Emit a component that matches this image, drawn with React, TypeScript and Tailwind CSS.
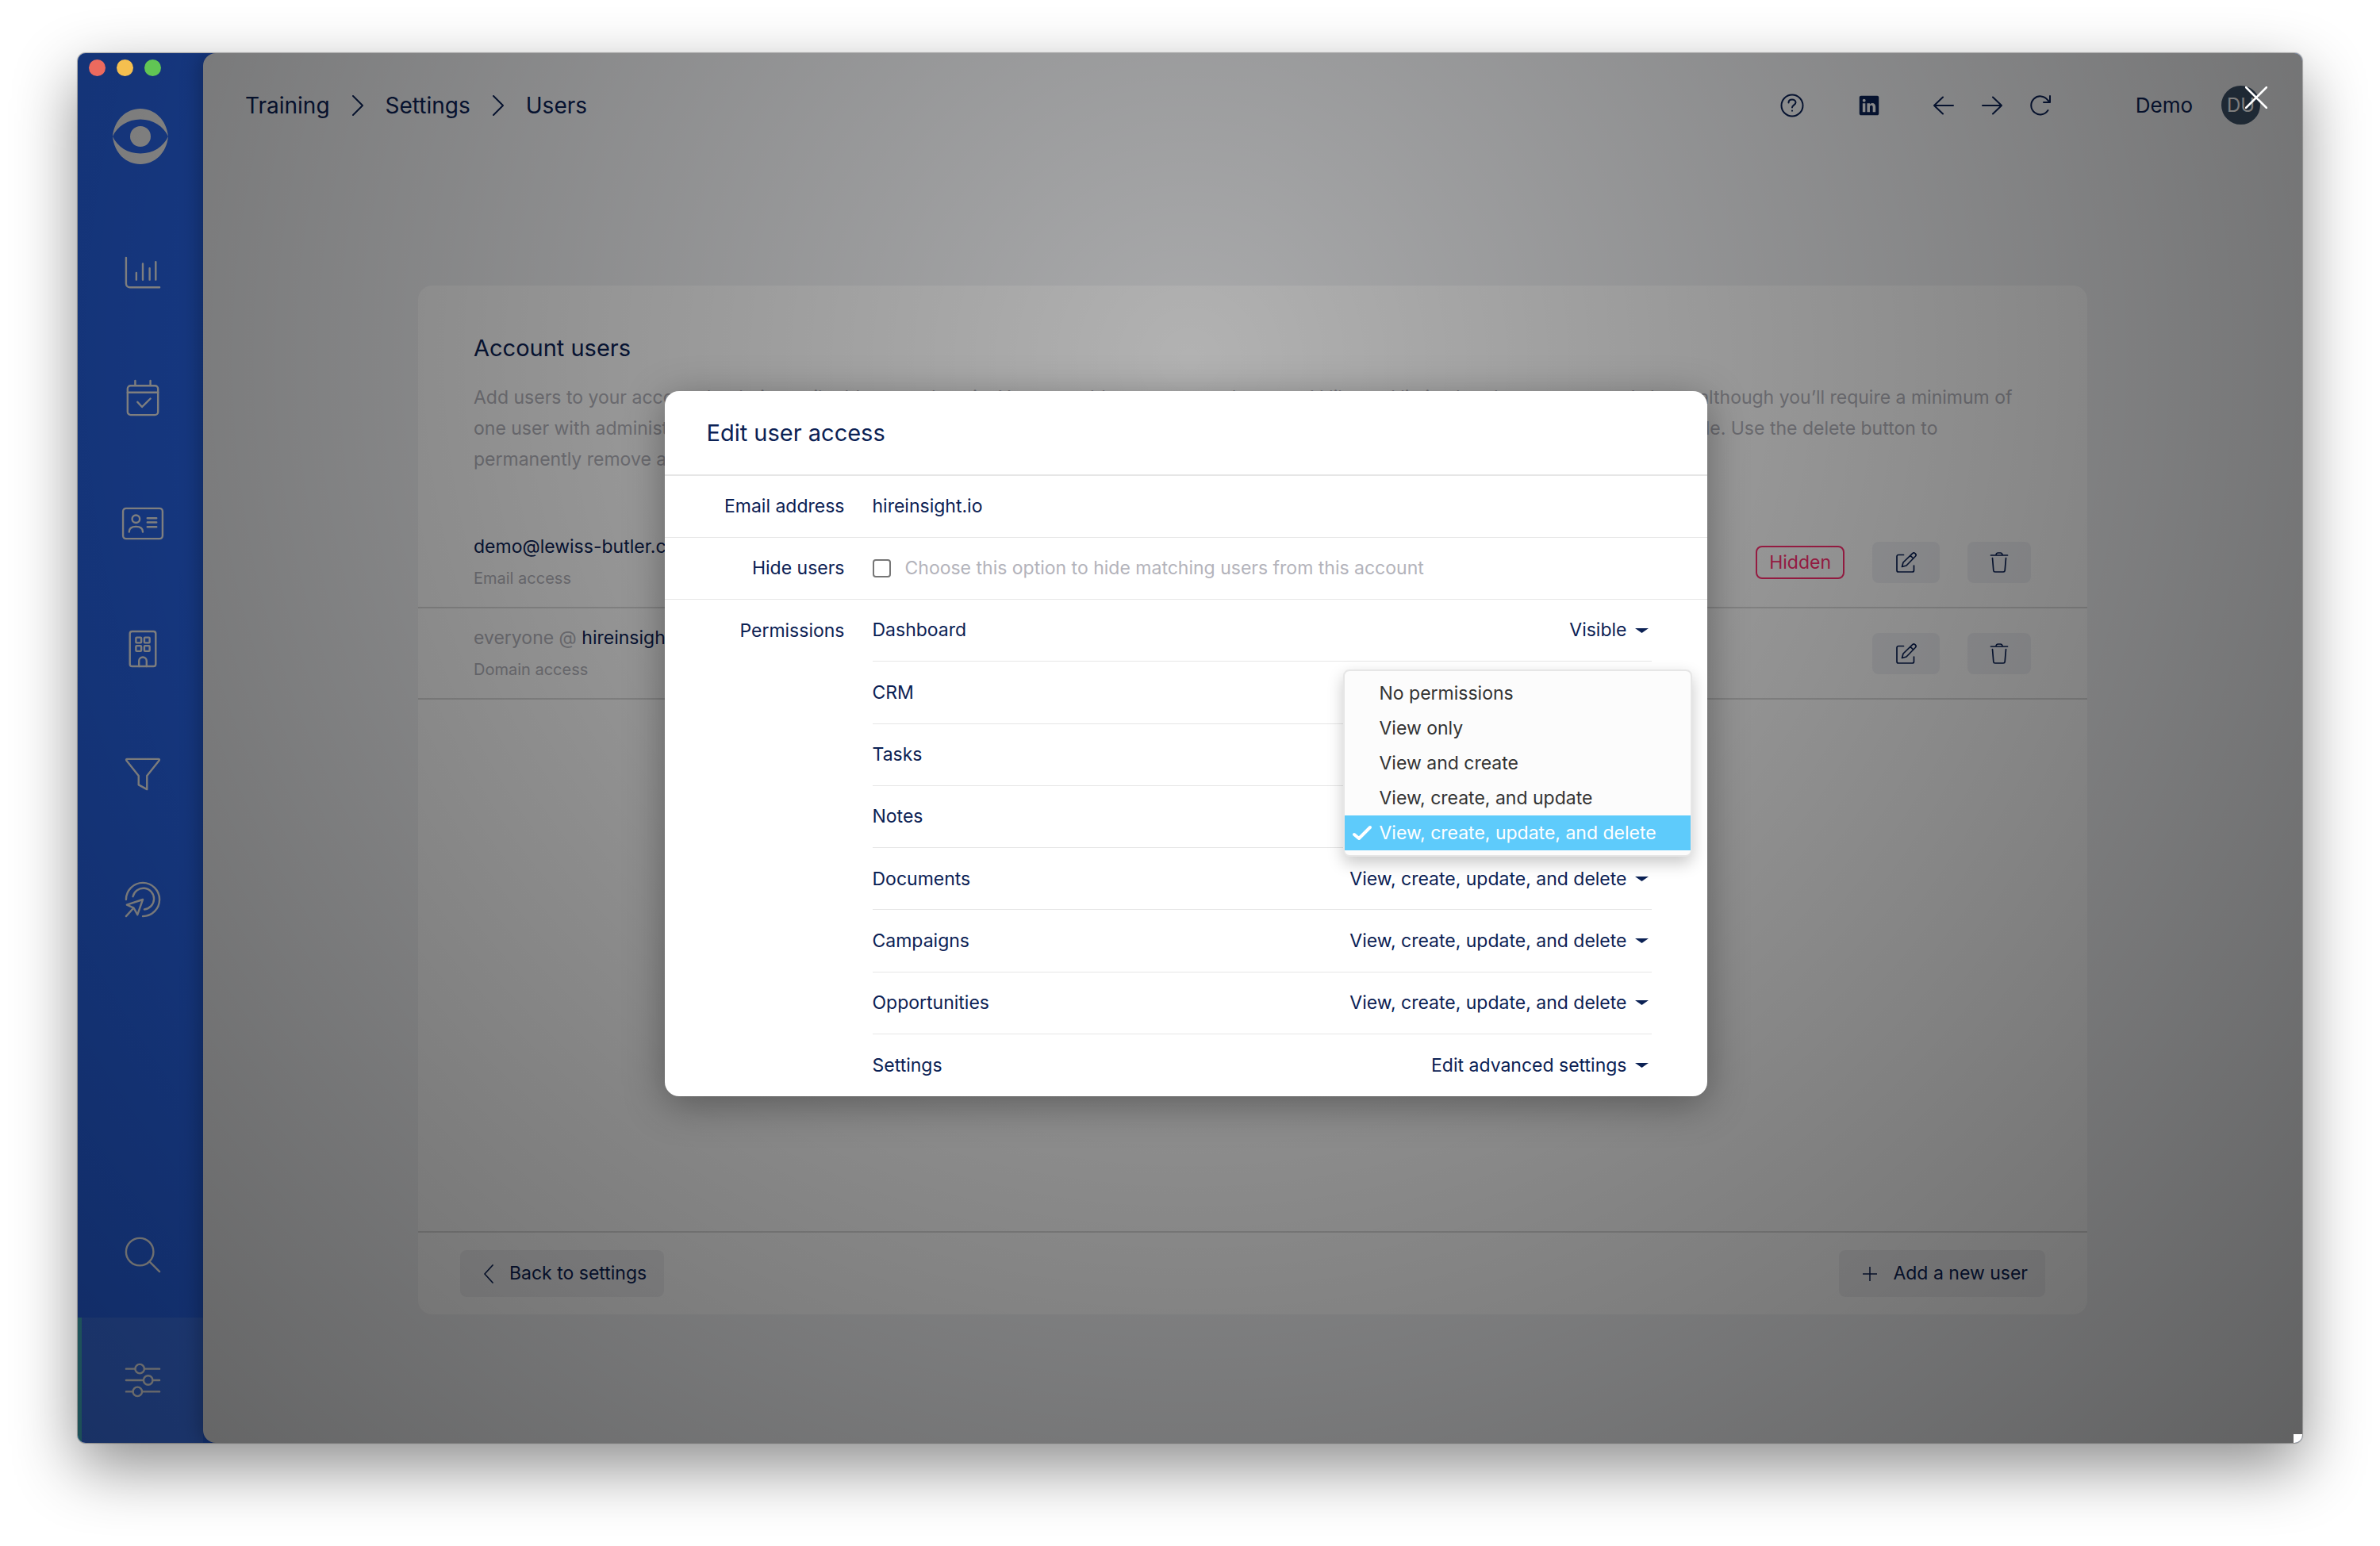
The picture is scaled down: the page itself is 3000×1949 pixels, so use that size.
import React, { useState } from "react";
import { IoLogoLinkedin } from "react-icons/io5";

interface IconProps {
  className?: string;
  viewBox?: string;
  strokeWidth?: number;
  children: React.ReactNode;
}

const Icon: React.FC<IconProps> = ({
  className = "size-12",
  viewBox = "0 0 48 48",
  strokeWidth = 2,
  children,
}) => (
  <svg
    className={className}
    viewBox={viewBox}
    fill="none"
    stroke="currentColor"
    strokeWidth={strokeWidth}
    strokeLinecap="round"
    strokeLinejoin="round"
    aria-hidden="true"
  >
    {children}
  </svg>
);

const navItems = [
  {
    label: "Dashboard",
    icon: <path d="M2 4v34a5 5 0 0 0 5 5h39M15.5 33v-9M24 33V12M33 33V18M41 33V9.5" />,
  },
  {
    label: "Tasks",
    icon: (
      <>
        <rect x="4" y="7.5" width="40" height="38.5" rx="4" />
        <path d="M4 16.5h40M14 1v6M34 1v6M17 29l6 6.5L34 24.5" />
      </>
    ),
  },
  {
    label: "Contacts",
    icon: (
      <>
        <rect x="-2" y="4" width="52" height="40" rx="4" />
        <circle cx="15" cy="18" r="5" />
        <path d="M6 35c0-4.5 3-7 9-7s9 2.5 9 7M30 17h12M30 22.5h12M30 28.5h12" />
      </>
    ),
  },
  {
    label: "Companies",
    icon: (
      <>
        <rect x="7" y="1" width="34" height="46" rx="3" />
        <rect x="15" y="9" width="7" height="7" rx="1" />
        <rect x="26" y="9" width="7" height="7" rx="1" />
        <rect x="15" y="20" width="7" height="7" rx="1" />
        <rect x="26" y="20" width="7" height="7" rx="1" />
        <path d="M19 47v-7a5 5 0 0 1 10 0v7" />
      </>
    ),
  },
  {
    label: "Pipeline",
    icon: <path d="M3 4h42c1 0 1 1 .5 2L29.5 26v18L18.5 38V26L2.5 6c-.5-1-.5-2 .5-2z" />,
  },
  {
    label: "Campaigns",
    icon: (
      <>
        <path d="M2 24a22 22 0 1 1 22 22" />
        <path d="M11 20a14 14 0 1 1 15 17" />
        <path d="M24 24L3 31l9 4 5 9zM12 35L2 46" />
      </>
    ),
  },
];

const rights = "View, create, update, and delete";

const permissions = [
  { name: "Dashboard", value: "Visible" },
  { name: "CRM", value: rights, open: true },
  { name: "Tasks", value: rights },
  { name: "Notes", value: rights },
  { name: "Documents", value: rights },
  { name: "Campaigns", value: rights },
  { name: "Opportunities", value: rights },
  { name: "Settings", value: "Edit advanced settings" },
];

const options = [
  "No permissions",
  "View only",
  "View and create",
  "View, create, and update",
  rights,
];

const Sidebar: React.FC = () => (
  <aside className="flex w-[158px] shrink-0 flex-col text-white">
    <div className="relative z-20 flex gap-3.5 pt-2 pl-3.5">
      <span className="size-[21px] rounded-full bg-[#ec6a5e]" />
      <span className="size-[21px] rounded-full bg-[#f5bf4f]" />
      <span className="size-[21px] rounded-full bg-[#61c554]" />
    </div>
    <svg className="mx-auto mt-[41px] mb-[58px] size-[70px]" viewBox="0 0 70 70" fill="currentColor" aria-hidden="true">
      <path d="M0 35C6 22 19 13.5 35 13.5S64 22 70 35C68 14 53 0 35 0S2 14 0 35z" />
      <path d="M0 35c6 13 19 21.5 35 21.5S64 48 70 35c-2 21-17 35-35 35S2 56 0 35z" />
      <circle cx="35" cy="35" r="13" />
    </svg>
    <nav className="flex flex-1 flex-col">
      {navItems.map((item) => (
        <a
          key={item.label}
          href="#"
          aria-label={item.label}
          className="flex h-[158px] items-center justify-center border-l-[5px] border-transparent"
        >
          <Icon className="size-[46px] overflow-visible" strokeWidth={2.5}>
            {item.icon}
          </Icon>
        </a>
      ))}
      <a
        href="#"
        aria-label="Search"
        className="mt-auto flex h-[158px] items-center justify-center border-l-[5px] border-transparent"
      >
        <Icon className="size-[46px]" strokeWidth={2.5}>
          <circle cx="20" cy="20" r="18" />
          <path d="M33 33l13 13" />
        </Icon>
      </a>
      <a
        href="#"
        aria-label="Settings"
        className="flex h-[158px] items-center justify-center border-l-[5px] border-[#48c6d9] bg-white/10"
      >
        <Icon className="size-[46px]" strokeWidth={2.5}>
          <path d="M2 9h12M26 9h20M2 24h23M37 24h9M2 39h9M23 39h23" />
          <circle cx="20" cy="9" r="6" />
          <circle cx="31" cy="24" r="6" />
          <circle cx="17" cy="39" r="6" />
        </Icon>
      </a>
    </nav>
  </aside>
);

const Chevron: React.FC = () => (
  <Icon className="h-[26px] w-3.5" viewBox="0 0 14 26">
    <path d="M1 1l12 12L1 25" />
  </Icon>
);

const TopBar: React.FC = () => (
  <header className="flex items-center justify-between px-[53px] py-[41px]">
    <nav className="flex items-center gap-7 text-[28px]">
      <a href="#">Training</a>
      <Chevron />
      <a href="#">Settings</a>
      <Chevron />
      <a href="#">Users</a>
    </nav>
    <div className="flex items-center text-[26px]">
      <button type="button" aria-label="Help">
        <Icon className="size-[30px]" viewBox="0 0 30 30">
          <circle cx="15" cy="15" r="13.5" />
          <path d="M10.5 11.5c0-2.5 2-4 4.5-4s4.5 1.5 4.5 3.7c0 3-4.5 3.3-4.5 6.3M15 21.5v.2" />
        </Icon>
      </button>
      <a href="#" aria-label="LinkedIn" className="ml-[68px]">
        <IoLogoLinkedin className="size-7" />
      </a>
      <div className="ml-[67px] flex items-center gap-[35px]">
        <button type="button" aria-label="Back">
          <Icon className="size-[26px]" viewBox="0 0 26 26">
            <path d="M12 2.5L1 13l11 10.5M1 13h24" />
          </Icon>
        </button>
        <button type="button" aria-label="Forward">
          <Icon className="size-[26px]" viewBox="0 0 26 26">
            <path d="M14 2.5L25 13 14 23.5M25 13H1" />
          </Icon>
        </button>
        <button type="button" aria-label="Reload">
          <Icon className="size-[26px]" viewBox="0 0 26 26">
            <path d="M22.5 19A11.5 11.5 0 1 1 22 6l3 3M25 1v8h-8" />
          </Icon>
        </button>
      </div>
      <span className="ml-[107px]">Demo</span>
      <span className="ml-9 flex size-[49px] items-center justify-center rounded-full bg-[#3e536a] text-2xl text-white">
        DU
      </span>
    </div>
  </header>
);

const RowActions: React.FC = () => (
  <>
    <button
      type="button"
      aria-label="Edit"
      className="flex h-[52px] w-[85px] items-center justify-center rounded-lg bg-[#f1f2f6]"
    >
      <Icon className="size-[26px]" viewBox="0 0 26 26" strokeWidth={1.7}>
        <path d="M9.5 3.5H3a2 2 0 0 0-2 2V23a2 2 0 0 0 2 2h17.5a2 2 0 0 0 2-2v-6" />
        <path d="M7.5 18.5L9 13 20.5 1.8a2.6 2.6 0 0 1 3.7 3.7L13 17zM18 4.3L21.7 8" />
      </Icon>
    </button>
    <button
      type="button"
      aria-label="Delete"
      className="flex h-[52px] w-20 items-center justify-center rounded-lg bg-[#f1f2f6]"
    >
      <Icon className="size-[26px]" viewBox="0 0 26 26" strokeWidth={1.7}>
        <path d="M2.5 4h21M9 4c0-2 1-3 2.5-3h3C16 1 17 2 17 4M4.5 7.5l1.3 15.7a2 2 0 0 0 2 1.8h10.4a2 2 0 0 0 2-1.8l1.3-15.7" />
      </Icon>
    </button>
  </>
);

const UsersCard: React.FC = () => (
  <section className="mx-[271px] my-[162px] flex flex-1 flex-col rounded-[18px] bg-white text-[23px]">
    <div className="px-[70px] pt-[58px]">
      <h1 className="text-[29px] leading-[42px]">Account users</h1>
      <p className="mt-[22px] leading-[39px] text-[#b3b3bb]">
        Add users to your account by their email address or domain. You can add as many people as you’d
        like and limit what they can see and share, although you’ll require a minimum of
        <br />
        one user with administrator access. Hidden users still have direct access to the account but
        they are never listed or suggested as being available. Use the delete button to
        <br />
        permanently remove a user from this account.
      </p>
    </div>
    <ul className="mt-[53px] flex-1">
      <li className="flex h-[115px] items-center gap-[35px] border-b-2 border-[#dcdcdc] pr-[71px] pl-[70px]">
        <div className="flex-1">
          <div className="leading-10">demo@lewiss-butler.com</div>
          <div className="text-xl leading-10 text-[#b3b3bb]">Email access</div>
        </div>
        <span className="rounded-lg border-2 border-[#ff2e70] px-[15px] leading-[38px] text-[#ff2e70]">
          Hidden
        </span>
        <RowActions />
      </li>
      <li className="flex h-[115px] items-center gap-[35px] border-b-2 border-[#dcdcdc] pr-[71px] pl-[70px]">
        <div className="flex-1">
          <div className="leading-10">
            <span className="text-[#b3b3bb]">everyone @</span> hireinsight.io
          </div>
          <div className="text-xl leading-10 text-[#b3b3bb]">Domain access</div>
        </div>
        <RowActions />
      </li>
    </ul>
    <footer className="flex justify-between border-t-2 border-[#dcdcdc] px-[53px] py-[22px]">
      <button
        type="button"
        className="flex h-[59px] items-center gap-5 rounded-lg bg-[#f1f1f3] pr-[22px] pl-[30px]"
      >
        <Icon className="h-6 w-3" viewBox="0 0 12 24" strokeWidth={1.7}>
          <path d="M11 1L1 12l10 11" />
        </Icon>
        Back to settings
      </button>
      <button
        type="button"
        className="flex h-[59px] items-center gap-5 rounded-lg bg-[#f1f1f3] pr-[22px] pl-[30px]"
      >
        <Icon className="size-[18px]" viewBox="0 0 18 18" strokeWidth={1.5}>
          <path d="M9 0v18M0 9h18" />
        </Icon>
        Add a new user
      </button>
    </footer>
  </section>
);

interface MenuProps {
  value: string;
  onChange: (value: string) => void;
}

const OptionsMenu: React.FC<MenuProps> = ({ value, onChange }) => (
  <ul className="absolute top-2.5 -right-[51px] z-10 w-[440px] rounded-lg border-2 border-[#e6e6e6] bg-[#fcfcfc] py-1.5 text-[#333] shadow-[0_8px_20px_rgba(0,0,0,0.22)]">
    {options.map((option) => (
      <li key={option}>
        <button
          type="button"
          onClick={() => onChange(option)}
          className={`flex h-11 w-full items-center pl-2 ${
            option === value ? "bg-[#5ecbfb] text-white" : ""
          }`}
        >
          <span className="w-9">
            {option === value && (
              <Icon className="size-7" viewBox="0 0 28 28" strokeWidth={4}>
                <path d="M4 16l6 5L24 7" />
              </Icon>
            )}
          </span>
          {option}
        </button>
      </li>
    ))}
  </ul>
);

const EditDialog: React.FC = () => {
  const [crm, setCrm] = useState(rights);

  return (
    <div
      role="dialog"
      aria-labelledby="dialog-title"
      className="flex min-h-[889px] w-[1314px] max-w-full flex-col rounded-[18px] bg-white text-[23px] shadow-[0_10px_50px_rgba(0,0,0,0.35)]"
    >
      <h2
        id="dialog-title"
        className="border-b-2 border-[#e6e6e6] px-[53px] text-[29px] leading-[105px]"
      >
        Edit user access
      </h2>
      <div className="flex h-[78px] items-center border-b border-[#e6e6e6]">
        <span className="w-[262px] pr-[35px] text-right">Email address</span>
        <span>hireinsight.io</span>
      </div>
      <div className="flex h-[78px] items-center border-b border-[#e6e6e6]">
        <span className="w-[262px] pr-[35px] text-right">Hide users</span>
        <label className="flex items-center gap-[18px] text-[#b3b3bb]">
          <input
            type="checkbox"
            className="size-[23px] appearance-none rounded border-2 border-[#767676] bg-white"
          />
          Choose this option to hide matching users from this account
        </label>
      </div>
      <div className="flex flex-1 pr-[70px]">
        <span className="w-[262px] pr-[35px] text-right leading-[78px]">Permissions</span>
        <ul className="flex flex-1 flex-col divide-y divide-[#e6e6e6]">
          {permissions.map((item) => (
            <li
              key={item.name}
              className="relative flex min-h-[78px] flex-1 items-center justify-between"
            >
              <label htmlFor={item.name}>{item.name}</label>
              <select
                id={item.name}
                defaultValue={item.value}
                className="appearance-none bg-transparent pr-[31px] [text-align-last:right]"
              >
                <option>{item.value}</option>
              </select>
              <svg
                className="pointer-events-none absolute right-1 h-1.5 w-[17px]"
                viewBox="0 0 17 6"
                fill="currentColor"
                aria-hidden="true"
              >
                <path d="M0 0h17L8.5 6z" />
              </svg>
              {item.open && <OptionsMenu value={crm} onChange={setCrm} />}
            </li>
          ))}
        </ul>
      </div>
    </div>
  );
};

export default function App() {
  return (
    <div className="flex min-h-screen bg-white px-[98px] pt-[67px] pb-[130px] font-['Inter',sans-serif] text-[#0b2154]">
      <div className="relative flex flex-1 overflow-hidden rounded-[10px] bg-[#2a6cfa] shadow-[0_0_1px_1px_rgba(0,0,0,0.3),0_30px_80px_rgba(0,0,0,0.45)]">
        <Sidebar />
        <main className="flex flex-1 flex-col rounded-l-[16px] bg-[#f3f4f6] shadow-[-4px_0_24px_rgba(0,0,0,0.25)]">
          <TopBar />
          <UsersCard />
        </main>

        {/* Dimmed backdrop with the dialog */}
        <div className="absolute inset-0 z-10 flex items-center justify-center bg-[radial-gradient(circle_at_50%_22%,rgba(0,0,0,0.3),rgba(0,0,0,0.6))] pr-[11px] pb-[11px]">
          <EditDialog />
          <button type="button" aria-label="Close" className="absolute top-[42px] right-11 text-white">
            <Icon className="size-7" viewBox="0 0 28 28" strokeWidth={2.5}>
              <path d="M1 1l26 26M27 1L1 27" />
            </Icon>
          </button>
          <span className="absolute right-0 bottom-0 size-[11px] bg-white" />
        </div>
      </div>
    </div>
  );
}
